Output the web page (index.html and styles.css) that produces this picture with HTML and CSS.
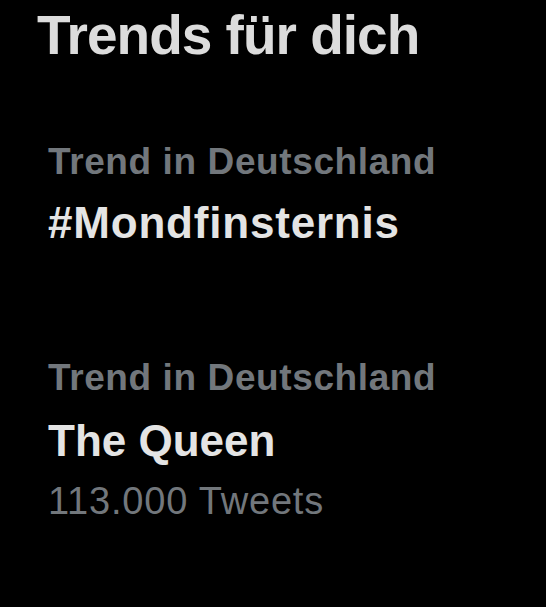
FILE: index.html
```html
<!DOCTYPE html>
<html lang="de">
<head>
<meta charset="utf-8">
<title>Trends für dich</title>
<link rel="stylesheet" href="styles.css">
</head>
<body>
<main class="page">
  <h1 class="title">Trends für dich</h1>
  <section class="trend trend-first">
    <div class="label">Trend in Deutschland</div>
    <div class="name">#Mondfinsternis</div>
  </section>
  <section class="trend trend-second">
    <div class="label">Trend in Deutschland</div>
    <div class="name name-queen">The Queen</div>
    <div class="count">113.000 Tweets</div>
  </section>
</main>
</body>
</html>
```
FILE: styles.css
```css
html, body {
  margin: 0;
  padding: 0;
  background: #000;
}
body {
  width: 546px;
  height: 607px;
  overflow: hidden;
  font-family: "Liberation Sans", Arial, sans-serif;
}
.page {
  display: flex;
  flex-direction: column;
  padding-top: 3px;
}
.title {
  margin: 0;
  padding-left: 37px;
  font-size: 55px;
  line-height: 64px;
  font-weight: 700;
  letter-spacing: -1px;
  color: #dcdcdc;
}
.trend {
  display: flex;
  flex-direction: column;
  padding-left: 48px;
}
.trend-first {
  margin-top: 73px;
}
.trend-second {
  margin-top: 107px;
}
.label {
  font-size: 37px;
  line-height: 44px;
  font-weight: 700;
  letter-spacing: 0.6px;
  color: #72777c;
}
.name {
  margin-top: 13px;
  font-size: 44px;
  line-height: 52px;
  font-weight: 700;
  letter-spacing: 0.8px;
  color: #e4e4e4;
}
.name-queen {
  margin-top: 15px;
  letter-spacing: 0;
}
.count {
  margin-top: 12px;
  font-size: 38px;
  line-height: 44px;
  font-weight: 400;
  letter-spacing: 0.8px;
  color: #72777c;
}
```
